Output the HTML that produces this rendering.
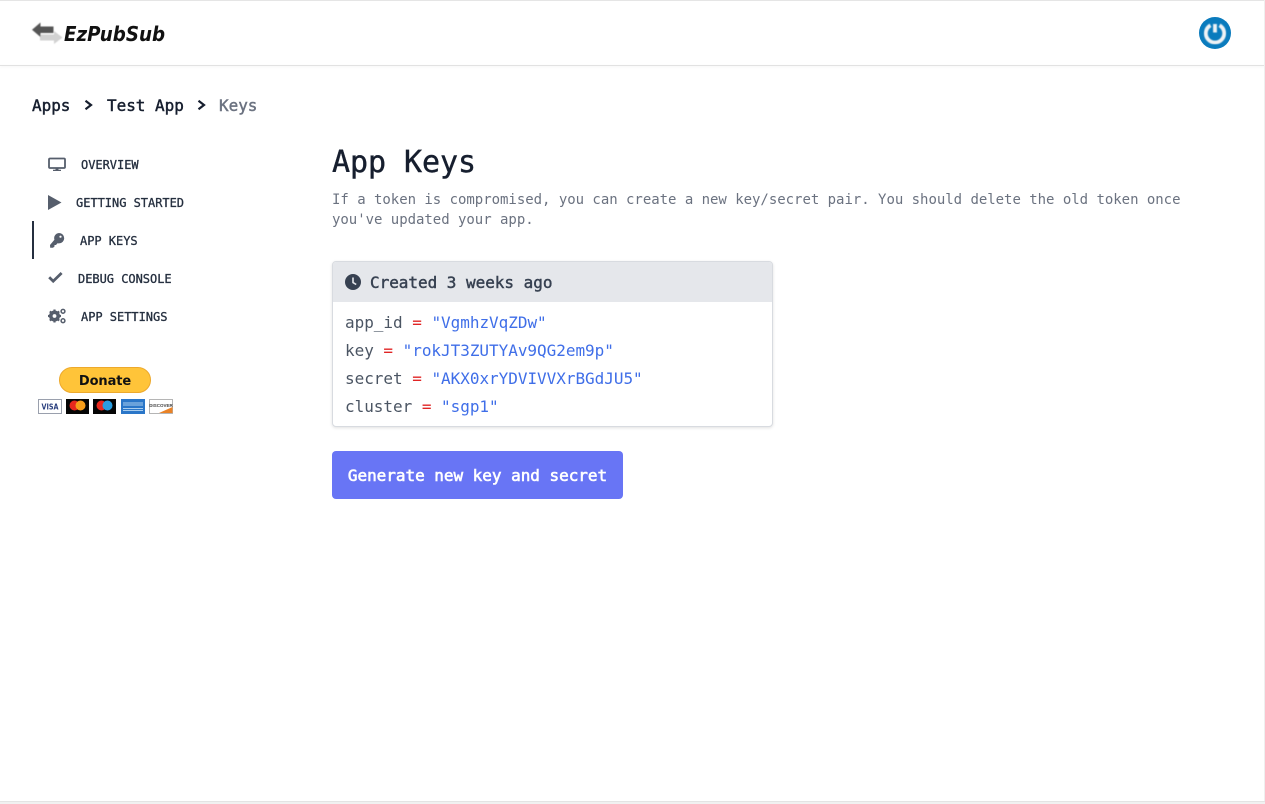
<!DOCTYPE html>
<html lang="en">
<head>
<meta charset="utf-8">
<title>App Keys</title>
<style>
html,body{margin:0;padding:0;background:#fff}
body{width:1265px;height:804px;position:relative;overflow:hidden;font-family:"DejaVu Sans Mono","Liberation Mono",monospace;color:#161e2e}
.a{position:absolute;white-space:pre}
.nav{font-size:12px;line-height:16px;color:#252f3f;letter-spacing:-.024px;-webkit-text-stroke:.3px #252f3f}
.ln{font-size:16px;line-height:28px;color:#4b5563;left:345px;letter-spacing:-.032px}
.ln i{font-style:normal;color:#e02424}
.ln b{font-weight:400;color:#3f6ee8}
.bc{font-size:16px;line-height:24px;letter-spacing:-.032px;-webkit-text-stroke:.45px currentColor}
svg{position:absolute;display:block}
</style>
</head>
<body>
<div class="a" style="left:0;top:0;width:1265px;height:1px;background:#e5e5e5"></div>
<div class="a" style="left:0;top:65px;width:1265px;height:1px;background:#e2e2e2;box-shadow:0 1px 2px rgba(0,0,0,.06)"></div>
<div class="a" style="left:1264px;top:0;width:1px;height:804px;background:#efefef"></div>
<div class="a" style="left:0;top:801px;width:1265px;height:3px;background:#f1f1f1;border-top:1px solid #e4e4e4;box-sizing:border-box"></div>

<svg style="left:30px;top:20px" width="34" height="26" viewBox="0 0 34 26">
  <defs><filter id="b" x="-20%" y="-20%" width="140%" height="140%"><feGaussianBlur stdDeviation=".55"/></filter></defs>
  <g filter="url(#b)">
    <path d="M10 14.500H24V11L32.500 17.500 24 24V20.500H10Z" fill="#d2d2d2"/>
    <path d="M10.500 2.500V6.500H23.500V13H10.500V17L2 9.700Z" fill="#555"/>
  </g>
</svg>
<svg style="left:62px;top:18px" width="106" height="30" viewBox="0 0 106 30">
  <text x="2" y="23" font-family="DejaVu Sans, sans-serif" font-size="20.500" font-weight="700" font-style="italic" fill="#111" textLength="101" lengthAdjust="spacingAndGlyphs">EzPubSub</text>
</svg>

<svg style="left:1199px;top:17px" width="32" height="32" viewBox="0 0 32 32">
  <defs><filter id="c"><feGaussianBlur stdDeviation=".5"/></filter></defs>
  <circle cx="16" cy="16" r="16" fill="#0a7bbd"/>
  <g filter="url(#c)" fill="none" stroke="#eef2f5" stroke-width="3.800">
    <path d="M11.500 8.300A9.200 9.200 0 1 0 20.500 8.300"/>
    <path d="M16 7V15.500"/>
  </g>
</svg>

<div class="a bc" style="left:32px;top:94px;color:#161e2e">Apps</div>
<svg style="left:82px;top:98px" width="12" height="14" viewBox="0 0 12 14"><path d="M3.500 2.800 9 7 3.500 11.200" fill="none" stroke="#161e2e" stroke-width="2.200"/></svg>
<div class="a bc" style="left:107px;top:94px;color:#161e2e">Test App</div>
<svg style="left:195px;top:98px" width="12" height="14" viewBox="0 0 12 14"><path d="M3.500 2.800 9 7 3.500 11.200" fill="none" stroke="#161e2e" stroke-width="2.200"/></svg>
<div class="a bc" style="left:219px;top:94px;color:#6b7280">Keys</div>

<!-- Sidebar -->
<div class="a" style="left:32px;top:221px;width:2px;height:38px;background:#252f3f"></div>

<svg style="left:48px;top:157px" width="18" height="15" viewBox="0 0 18 15">
  <rect x="1" y="1.500" width="16" height="9.500" rx="1" fill="none" stroke="#565e6c" stroke-width="1.800"/>
  <path d="M7.500 11.500V12.800H5V14H13V12.800H10.500V11.500Z" fill="#565e6c"/>
</svg>
<div class="a nav" style="left:81px;top:157px">OVERVIEW</div>

<svg style="left:48px;top:195px" width="14" height="15" viewBox="0 0 14 15"><path d="M0 0V15L13.500 7.500Z" fill="#565e6c"/></svg>
<div class="a nav" style="left:76px;top:195px">GETTING STARTED</div>

<svg style="left:49px;top:233px" width="16" height="15" viewBox="0 0 16 15">
  <path d="M10 0A5.200 5.200 0 0 1 10 10.400 5.200 5.200 0 0 1 8.500 10.200L7 12H5.500V13.500L4 14.800H1.200L1 12 5.400 6.800A5.200 5.200 0 0 1 10 0Z" fill="#565e6c"/>
  <circle cx="11.500" cy="3.700" r="1.100" fill="#fff"/>
</svg>
<div class="a nav" style="left:80px;top:233px">APP KEYS</div>

<svg style="left:48px;top:271px" width="15" height="13" viewBox="0 0 15 13"><path d="M1.200 6.300 5.200 10.200 13.600 2" fill="none" stroke="#565e6c" stroke-width="2.800"/></svg>
<div class="a nav" style="left:78px;top:271px">DEBUG CONSOLE</div>

<svg style="left:48px;top:308px" width="18" height="16" viewBox="0 0 18 16">
  <circle cx="6.500" cy="8" r="4" fill="none" stroke="#565e6c" stroke-width="3"/>
  <path d="M6.500 1.500V14.500M0 8H13M1.900 3.400 11.100 12.600M11.100 3.400 1.900 12.600" stroke="#565e6c" stroke-width="2.200"/>
  <circle cx="6.500" cy="8" r="1.900" fill="#fff"/>
  <circle cx="15" cy="3.300" r="1.900" fill="none" stroke="#565e6c" stroke-width="1.500"/>
  <circle cx="15" cy="12.700" r="1.900" fill="none" stroke="#565e6c" stroke-width="1.500"/>
</svg>
<div class="a nav" style="left:81px;top:309px">APP SETTINGS</div>

<!-- Donate -->
<div class="a" style="left:59px;top:367px;width:92px;height:26px;box-sizing:border-box;border-radius:13px;background:#ffc439;border:1px solid #eda92c;text-align:center;font:700 13px/27px 'DejaVu Sans',sans-serif;letter-spacing:-.1px;color:#111">Donate</div>
<svg style="left:38px;top:399px" width="136" height="15" viewBox="0 0 136 15">
  <defs><filter id="d"><feGaussianBlur stdDeviation=".3"/></filter></defs>
  <rect x=".5" y=".5" width="23" height="14" fill="#fff" stroke="#9aa0ad"/>
  <text x="12" y="10.500" text-anchor="middle" font-family="DejaVu Sans, sans-serif" font-size="7.500" font-weight="700" fill="#2a3f7e" textLength="17" lengthAdjust="spacingAndGlyphs">VISA</text>
  <rect x="28" width="23" height="15" fill="#050505"/>
  <circle cx="36.500" cy="6.500" r="5" fill="#e8281e"/>
  <circle cx="42.500" cy="6.500" r="5" fill="#f79e1b"/>
  <rect x="55" width="23" height="15" fill="#050505"/>
  <circle cx="63.500" cy="6.500" r="5" fill="#e8281e"/>
  <circle cx="69.500" cy="6.500" r="5" fill="#2a9de0"/>
  <rect x="83" width="24" height="15" fill="#2a76c8"/>
  <path d="M85 4H105M85 6H105M85 9.500H105M85 11.500H105" stroke="#a9cdee" stroke-width="1" filter="url(#d)"/>
  <rect x="111.500" y=".5" width="23" height="14" fill="#fff" stroke="#b5b5b5"/>
  <path d="M121 14 134.500 8V14Z" fill="#e98226"/>
  <text x="123" y="8" text-anchor="middle" font-family="Liberation Sans, sans-serif" font-size="4.500" font-weight="700" fill="#444">DISCOVER</text>
</svg>

<!-- Main -->
<div class="a" style="left:332px;top:143px;font-size:30px;line-height:40px;letter-spacing:-.06px;color:#161e2e;-webkit-text-stroke:.4px #161e2e">App Keys</div>
<div class="a" style="left:332px;top:190px;font-size:14px;line-height:20px;letter-spacing:-.028px;color:#6b7280">If a token is compromised, you can create a new key/secret pair. You should delete the old token once
you've updated your app.</div>

<div class="a" style="left:332px;top:261px;width:441px;height:166px;box-sizing:border-box;border:1px solid #d8dbe0;border-radius:4px;background:#fff;box-shadow:0 1px 3px rgba(0,0,0,.12)"></div>
<div class="a" style="left:333px;top:262px;width:439px;height:40px;background:#e5e7eb;border-radius:3px 3px 0 0"></div>
<svg style="left:345px;top:274px" width="16" height="16" viewBox="0 0 16 16">
  <circle cx="8" cy="8" r="8" fill="#374151"/>
  <path d="M8 3.500V8.500L11.200 10.500" fill="none" stroke="#e5e7eb" stroke-width="1.600"/>
</svg>
<div class="a bc" style="left:370px;top:271px;color:#374151">Created 3 weeks ago</div>

<div class="a ln" style="top:309px">app_id <i>=</i> <b>"VgmhzVqZDw"</b></div>
<div class="a ln" style="top:337px">key <i>=</i> <b>"rokJT3ZUTYAv9QG2em9p"</b></div>
<div class="a ln" style="top:365px">secret <i>=</i> <b>"AKX0xrYDVIVVXrBGdJU5"</b></div>
<div class="a ln" style="top:393px">cluster <i>=</i> <b>"sgp1"</b></div>

<div class="a" style="left:332px;top:451px;width:291px;height:48px;border-radius:4px;background:#6875f5;color:#fff;font-size:16px;line-height:50px;letter-spacing:-.032px;-webkit-text-stroke:.6px #fff;text-align:center">Generate new key and secret</div>
</body>
</html>
